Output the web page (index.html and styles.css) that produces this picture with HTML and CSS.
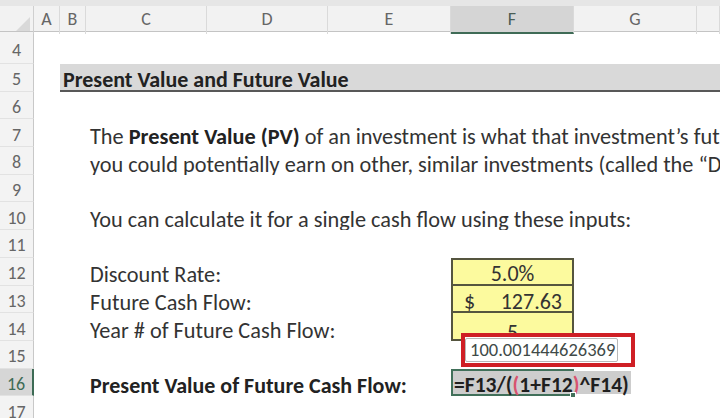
FILE: index.html
```html
<!DOCTYPE html>
<html>
<head>
<meta charset="utf-8">
<link rel="stylesheet" href="styles.css">
</head>
<body>
<div class="app">
  <div class="topstrip"></div>
  <div class="grid colheads">
    <div class="corner"><span class="tri"></span></div>
    <div class="ch">A</div>
    <div class="ch">B</div>
    <div class="ch">C</div>
    <div class="ch">D</div>
    <div class="ch">E</div>
    <div class="ch sel">F</div>
    <div class="ch">G</div>
    <div class="ch"></div>
  </div>

  <div class="grid row r4"><div class="rh">4</div></div>
  <div class="grid row"><div class="rh">5</div><div class="cell title"><span>Present Value and Future Value</span></div></div>
  <div class="grid row"><div class="rh">6</div></div>
  <div class="grid row"><div class="rh">7</div><div class="cell text"><span>The <b>Present Value (PV)</b> of an investment is what that investment’s future cash flows are worth today,</span></div></div>
  <div class="grid row"><div class="rh">8</div><div class="cell text"><span>you could potentially earn on other, similar investments (called the “Discount Rate”).</span></div></div>
  <div class="grid row"><div class="rh">9</div></div>
  <div class="grid row"><div class="rh">10</div><div class="cell text"><span>You can calculate it for a single cash flow using these inputs:</span></div></div>
  <div class="grid row"><div class="rh">11</div></div>
  <div class="grid row"><div class="rh">12</div><div class="cell label"><span>Discount Rate:</span></div><div class="cell yel first center">5.0%</div></div>
  <div class="grid row"><div class="rh">13</div><div class="cell label"><span>Future Cash Flow:</span></div><div class="cell yel acct"><span>$</span><span>127.63</span></div></div>
  <div class="grid row"><div class="rh">14</div><div class="cell label"><span>Year # of Future Cash Flow:</span></div><div class="cell yel last center">5</div></div>
  <div class="grid row"><div class="rh">15</div>
    <div class="cell fcell">
      <div class="redbox"><span class="tip">100.001444626369</span></div>
    </div>
  </div>
  <div class="grid row"><div class="rh sel">16</div><div class="cell label bold"><span>Present Value of Future Cash Flow:</span></div>
    <div class="cell formula"><span class="ftext">=F13/(<span class="p">(</span>1+F12<span class="p">)</span>^F14)</span><span class="handle"></span></div>
  </div>
  <div class="grid row"><div class="rh">17</div></div>
</div>
</body>
</html>
```

FILE: styles.css
```css
* { box-sizing: border-box; margin: 0; padding: 0; }
html, body { width: 720px; height: 418px; overflow: hidden; background: #fff; }
body { font-family: Carlito, Lato, sans-serif; color: #333; }

.app { width: 720px; height: 418px; overflow: hidden; }

.topstrip { height: 6px; background: #e6e6e6; }

.grid {
  display: grid;
  grid-template-columns: 34px 26px 26px 121px 121px 123px 123px 123px 1fr;
}

.colheads { height: 26px; background: #f2f2f2; border-bottom: 1px solid #c4c4c4; }
.corner { border-right: 1px solid #cfcfcf; position: relative; }
.tri {
  position: absolute; right: 3px; bottom: 3px; width: 0; height: 0;
  border-left: 14px solid transparent; border-bottom: 14px solid #d9d9d9;
}
.ch {
  border-right: 1px solid #dadada;
  font-size: 18px; color: #666; text-align: center; line-height: 27px;
}
.ch.sel { background: #d5d5d5; border-bottom: 2px solid #3f6b56; color: #4b5e55; line-height: 26px; }

.row { height: 27.7px; }
.row.r4 { height: 32px; }

.rh {
  background: #f3f3f3;
  border-right: 1px solid #c8c8c8;
  border-bottom: 1px solid #e2e2e2;
  font-size: 18px; color: #666; text-align: center;
  display: flex; align-items: center; justify-content: center; padding-top: 4px;
}
.rh.sel { background: #d6d6d6; color: #3d6b55; border-right: 2px solid #3d6b55; }

.cell {
  display: flex; align-items: flex-end;
  font-size: 22.3px; line-height: 0.9; white-space: nowrap; overflow: hidden;
}

.title {
  grid-column: 3 / -1;
  background: #d9d9d9; border-bottom: 2px solid #585858;
  font-weight: bold; font-size: 22px; color: #222; padding-left: 3px;
}

.text { grid-column: 4 / -1; padding-left: 4px; }
.text b { color: #222; }
.label { grid-column: 4 / 7; padding-left: 4px; }
.bold { font-weight: bold; font-size: 22px; color: #222; }

.yel {
  grid-column: 7;
  background: #fcfa9e;
  border: 2px solid #55553f; border-top: none;
  font-size: 22px; line-height: 0.85;
}
.yel.first { border-top: 2px solid #55553f; }
.yel.last { line-height: 0.6; }
.center { justify-content: center; }
.acct { justify-content: space-between; padding: 0 10px 0 11px; }

.fcell { grid-column: 7; position: relative; overflow: visible; }
.redbox {
  position: absolute; left: 10px; top: -8px; width: 174px; height: 34px;
  border: 4px solid #cf1f25; background: #fff;
  display: flex; align-items: center;
}
.tip {
  height: 24px; display: flex; align-items: center;
  border: 1px solid #b8b8b8; border-radius: 2px;
  padding: 0 2px 0 4px;
  font-size: 18.5px; line-height: 1; color: #3f4a48;
}

.formula {
  grid-column: 7; position: relative; overflow: visible;
  border: 2px solid #41705a;
  align-items: stretch;
  font-size: 21.6px;
}
.ftext {
  background: #cdcdcd; font-weight: bold; color: #1f1f1f;
  display: flex; align-items: flex-end; padding-left: 1px; padding-right: 2px;
}
.ftext .p { color: #d8536f; }
.handle {
  position: absolute; right: -4px; bottom: -4px; width: 6px; height: 6px;
  background: #41705a; border: 1px solid #fff;
}
```
